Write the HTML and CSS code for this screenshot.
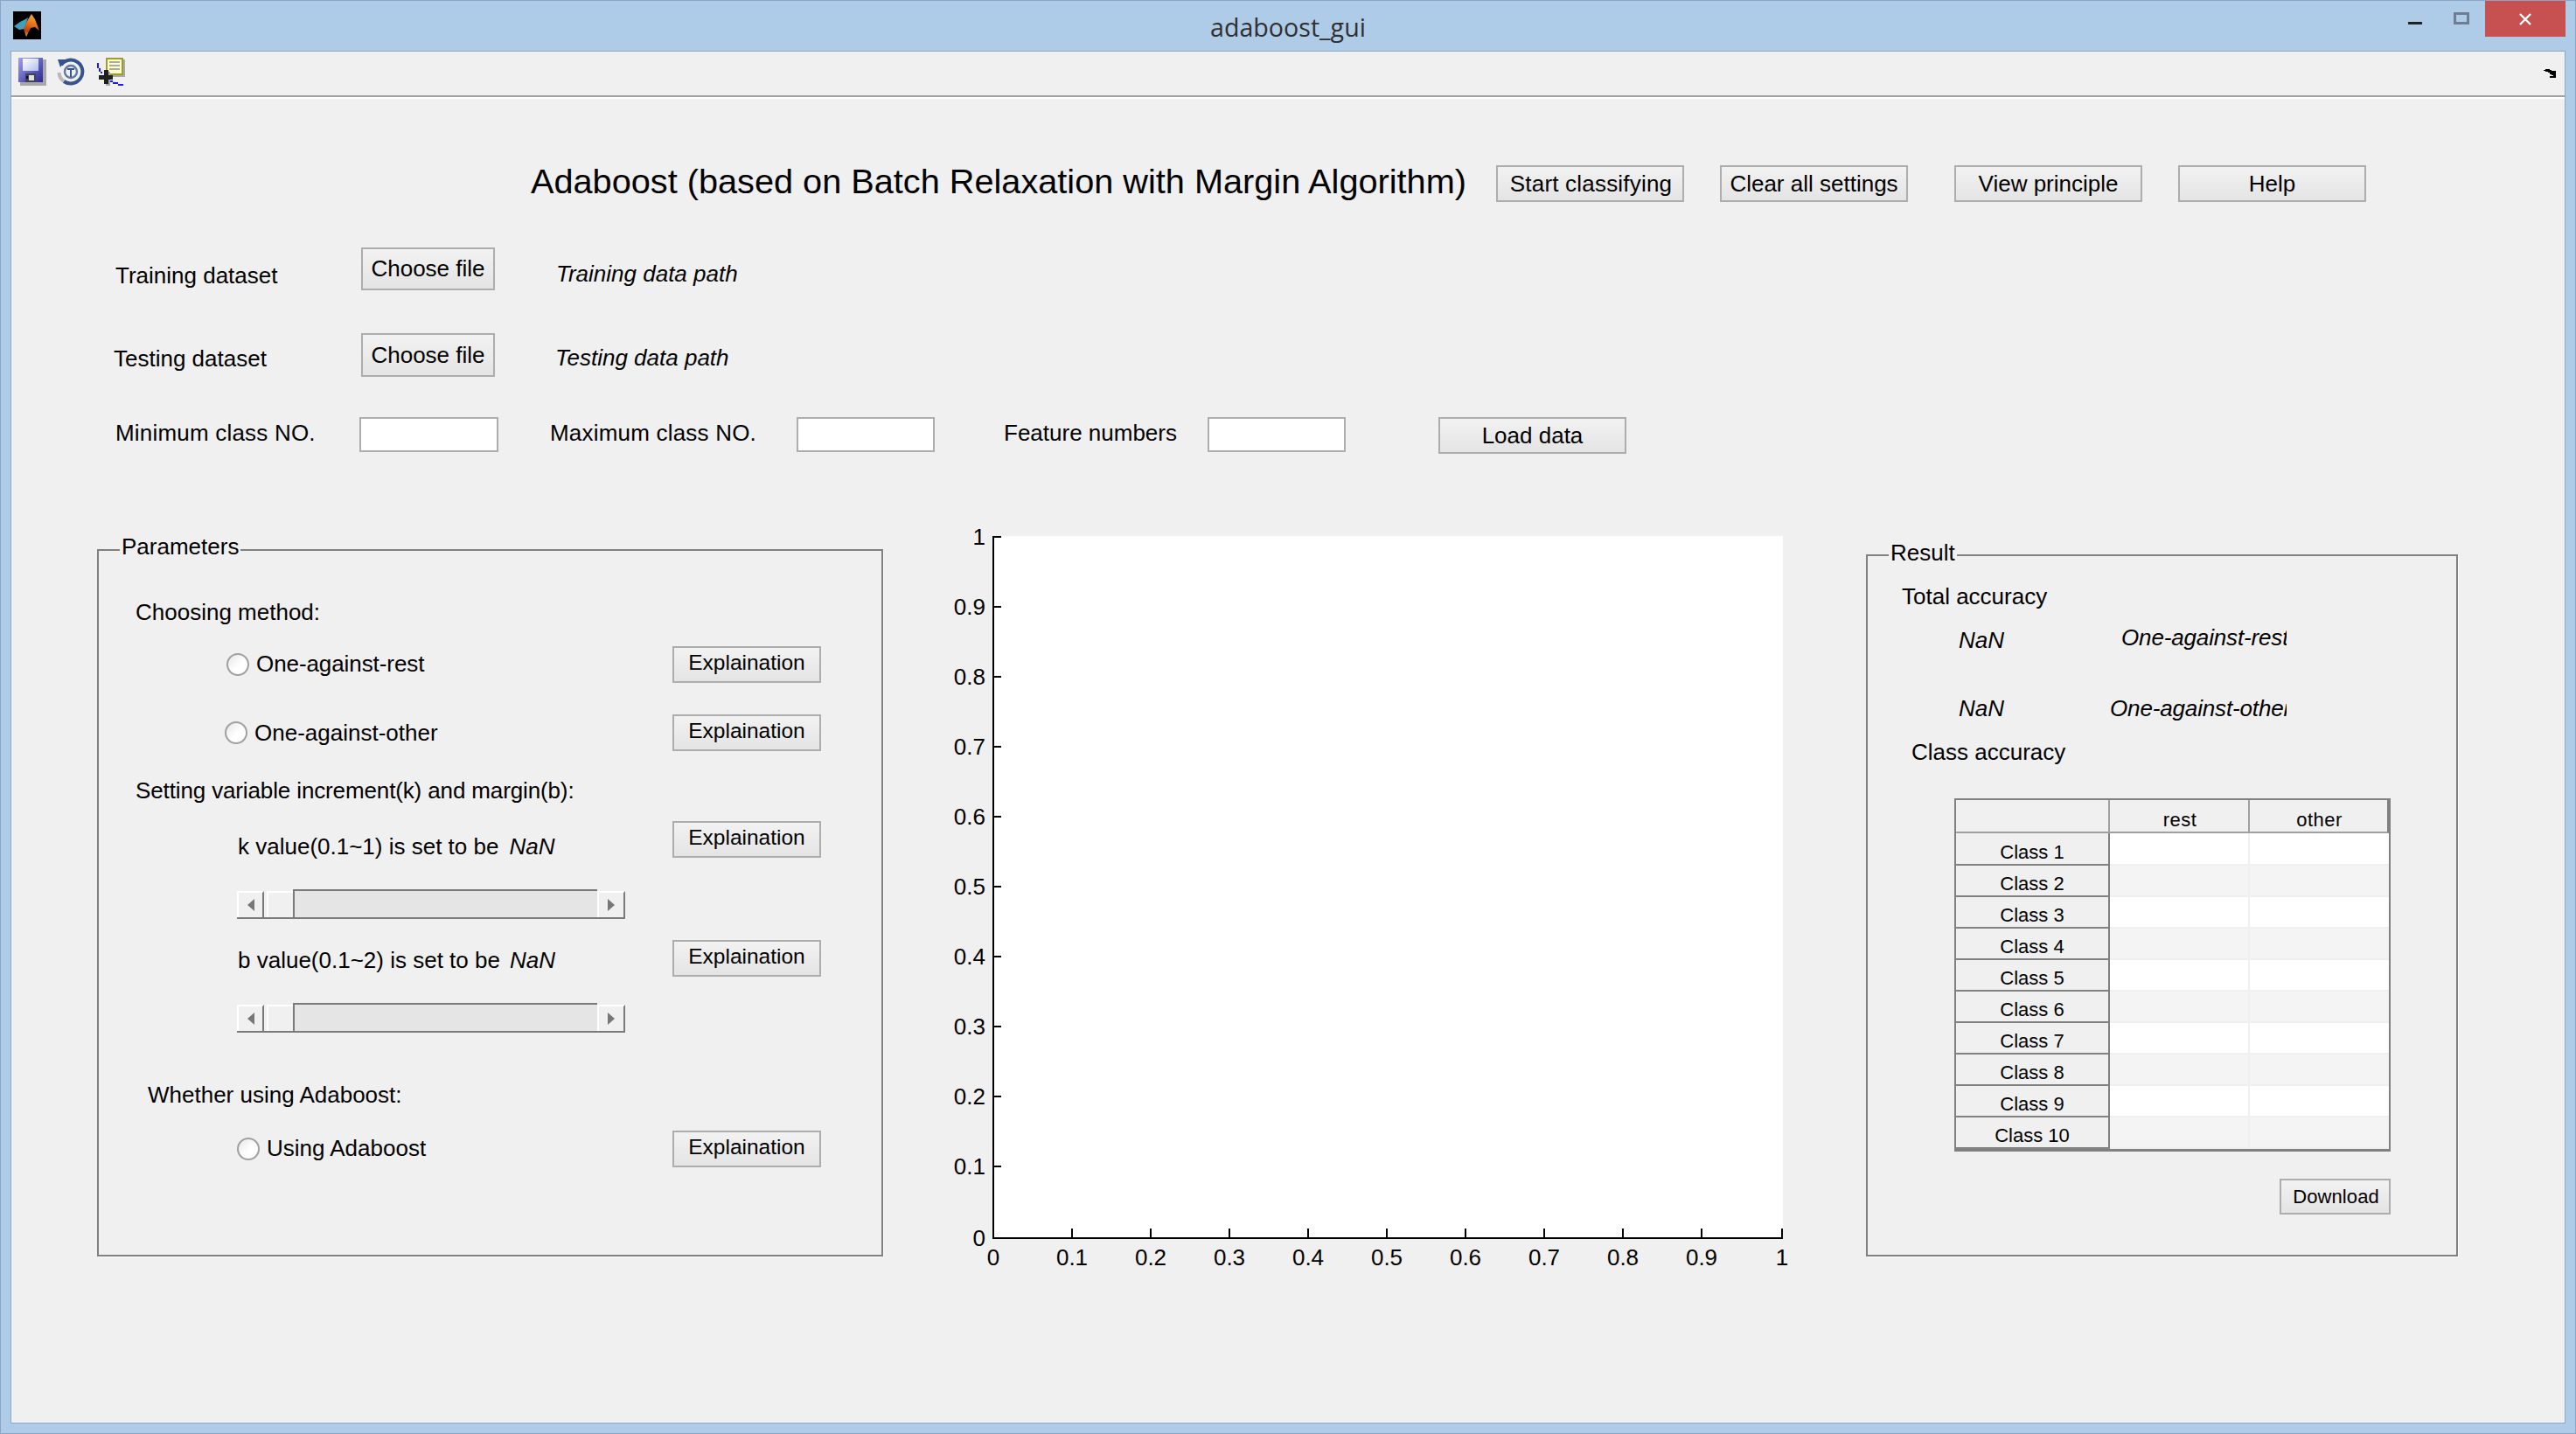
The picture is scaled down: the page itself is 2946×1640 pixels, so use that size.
FILE: index.html
```html
<!DOCTYPE html>
<html lang="en">
<head>
<meta charset="utf-8">
<title>adaboost_gui</title>
<link rel="stylesheet" href="styles.css">
</head>
<body>
<div class="window">
  <header class="titlebar">
    <svg class="app-logo" viewBox="0 0 32 32">
      <defs>
        <linearGradient id="peak" x1="0.6" y1="0" x2="0.4" y2="1">
          <stop offset="0" stop-color="#f0b040"/>
          <stop offset="0.45" stop-color="#e8701c"/>
          <stop offset="0.8" stop-color="#b8400f"/>
          <stop offset="1" stop-color="#e8a020"/>
        </linearGradient>
      </defs>
      <rect width="32" height="32" fill="#000"/>
      <polygon points="1,17 8,12 14,9 17,7 13,20 7,21" fill="#3fa0c0"/>
      <polygon points="21,3 25,9 30,22 25,18 20,19 15,29 12,20 16,11" fill="url(#peak)"/>
    </svg>
    <div class="window-title">adaboost_gui</div>
    <div class="window-controls">
      <span class="win-min"></span>
      <span class="win-max"></span>
      <span class="win-close">
        <svg viewBox="0 0 14 14" class="win-x"><path d="M1 1 L13 13 M13 1 L1 13" stroke="#fff" stroke-width="2.4" fill="none"/></svg>
      </span>
    </div>
  </header>

  <div class="client">
    <div class="toolbar">
      <svg class="tool tool-save" viewBox="0 0 32 32" shape-rendering="crispEdges">
        <defs>
          <linearGradient id="disk" x1="0" y1="0" x2="1" y2="1">
            <stop offset="0" stop-color="#a0a0f8"/>
            <stop offset="1" stop-color="#282890"/>
          </linearGradient>
          <linearGradient id="label" x1="0" y1="0" x2="1" y2="1">
            <stop offset="0" stop-color="#fff"/>
            <stop offset="1" stop-color="#b0c0e8"/>
          </linearGradient>
        </defs>
        <rect x="2" y="2" width="30" height="30" fill="#a8a8a8"/>
        <rect x="0" y="0" width="28" height="28" fill="url(#disk)"/>
        <rect x="5" y="1" width="18" height="14" fill="url(#label)"/>
        <rect x="8" y="18" width="12" height="10" fill="#404058"/>
        <rect x="12" y="20" width="6" height="6" fill="#e0e0e0"/>
        <rect x="9" y="21" width="2" height="3" fill="#101020"/>
      </svg>
      <svg class="tool tool-revert" viewBox="0 0 32 32">
        <path d="M5 8 A13.5 13.5 0 1 1 8 27" fill="none" stroke="#36558f" stroke-width="4"/>
        <path d="M8 27 A13.5 13.5 0 0 1 2.5 17" fill="none" stroke="#b8b8b8" stroke-width="4"/>
        <polygon points="1,2 11,2 4,11" fill="#36558f"/>
        <circle cx="16" cy="16" r="7" fill="none" stroke="#5c78a8" stroke-width="2.4"/>
        <path d="M12 13 H20 M16 13 V22" fill="none" stroke="#36558f" stroke-width="2"/>
      </svg>
      <svg class="tool tool-plot" viewBox="0 0 32 32" shape-rendering="crispEdges">
        <rect x="12" y="2" width="20" height="20" fill="#a8a8a8"/>
        <rect x="10" y="0" width="20" height="20" fill="#9c9c30"/>
        <rect x="12" y="2" width="16" height="16" fill="#ffffc4"/>
        <rect x="14" y="4" width="12" height="2" fill="#aaa"/>
        <rect x="14" y="8" width="12" height="2" fill="#aaa"/>
        <rect x="14" y="12" width="12" height="2" fill="#aaa"/>
        <rect x="0" y="6" width="2" height="6" fill="#1a1aff"/>
        <rect x="2" y="12" width="2" height="4" fill="#1a1aff"/>
        <rect x="4" y="16" width="2" height="2" fill="#1a1aff"/>
        <rect x="14" y="26" width="4" height="2" fill="#1a1aff"/>
        <rect x="18" y="28" width="6" height="2" fill="#1a1aff"/>
        <rect x="24" y="30" width="6" height="2" fill="#1a1aff"/>
        <rect x="10" y="16" width="5" height="16" fill="#a8a8a8"/>
        <rect x="2" y="20" width="16" height="5" fill="#202020"/>
        <rect x="8" y="14" width="5" height="16" fill="#202020"/>
      </svg>
      <svg class="dock-arrow" viewBox="0 0 14 10" shape-rendering="crispEdges">
        <path d="M0 1 H2 V0 H7 V1 H9 V2 H14 V10 H7 V8 H11 V7 H9 V6 H7 V4 H5 V3 H2 V2 H0 Z" fill="#000"/>
      </svg>
    </div>

    <main class="figure">
      <div class="row row-title">
        <h1 class="main-title">Adaboost (based on Batch Relaxation with Margin Algorithm)</h1>
        <button class="btn btn-wide ls-start">Start classifying</button>
        <button class="btn btn-wide gap-41">Clear all settings</button>
        <button class="btn btn-wide gap-53">View principle</button>
        <button class="btn btn-wide gap-41">Help</button>
      </div>

      <div class="row row-train">
        <span class="text w-train">Training dataset</span>
        <button class="btn btn-file h-49">Choose file</button>
        <span class="text italic path-train">Training data path</span>
      </div>

      <div class="row row-test">
        <span class="text w-test">Testing dataset</span>
        <button class="btn btn-file h-50">Choose file</button>
        <span class="text italic path-test">Testing data path</span>
      </div>

      <div class="row row-load">
        <span class="text w-min">Minimum class NO.</span>
        <input class="field field-first" type="text">
        <span class="text w-max">Maximum class NO.</span>
        <input class="field" type="text">
        <span class="text w-feat">Feature numbers</span>
        <input class="field" type="text">
        <button class="btn btn-wide gap-106">Load data</button>
      </div>

      <div class="workspace">
        <section class="panel panel-params">
          <span class="legend text legend-params">Parameters</span>

          <div class="text line-choosing">Choosing method:</div>

          <div class="prow prow-first">
            <input class="radio radio-a" type="radio" name="m">
            <span class="text opt-a">One-against-rest</span>
            <button class="btn btn-exp">Explaination</button>
          </div>
          <div class="prow prow-second">
            <input class="radio radio-b" type="radio" name="m">
            <span class="text opt-b">One-against-other</span>
            <button class="btn btn-exp">Explaination</button>
          </div>

          <div class="text line-setting">Setting variable increment(k) and margin(b):</div>

          <div class="prow prow-k">
            <span class="text value-label">k value(0.1~1) is set to be</span>
            <span class="text italic value-nan">NaN</span>
            <button class="btn btn-exp">Explaination</button>
          </div>
          <div class="slider slider-k">
            <span class="sl-btn"><i class="arrow-left"></i></span>
            <span class="sl-thumb"></span>
            <span class="sl-track"></span>
            <span class="sl-btn sl-btn-right"><i class="arrow-right"></i></span>
          </div>

          <div class="prow prow-b">
            <span class="text value-label">b value(0.1~2) is set to be</span>
            <span class="text italic value-nan">NaN</span>
            <button class="btn btn-exp">Explaination</button>
          </div>
          <div class="slider slider-b">
            <span class="sl-btn"><i class="arrow-left"></i></span>
            <span class="sl-thumb"></span>
            <span class="sl-track"></span>
            <span class="sl-btn sl-btn-right"><i class="arrow-right"></i></span>
          </div>

          <div class="text line-whether">Whether using Adaboost:</div>
          <div class="prow prow-using">
            <input class="radio radio-c" type="radio">
            <span class="text opt-c">Using Adaboost</span>
            <button class="btn btn-exp">Explaination</button>
          </div>
        </section>

        <svg class="plot" viewBox="1060 590 1040 880" width="1040" height="880">
          <rect x="1137" y="613" width="902" height="802" fill="#fff"/>
          <g class="plot-lines" shape-rendering="crispEdges" stroke="#000" stroke-width="2" fill="none">
            <path d="M1136 613 V1417 M1135 1416 H2039"/>
            <path d="M1136 614 H1145 M1136 694 H1145 M1136 774 H1145 M1136 854 H1145 M1136 934 H1145 M1136 1014 H1145 M1136 1094 H1145 M1136 1174 H1145 M1136 1254 H1145 M1136 1334 H1145"/>
            <path d="M1226 1416 V1405 M1316 1416 V1405 M1406 1416 V1405 M1496 1416 V1405 M1586 1416 V1405 M1676 1416 V1405 M1766 1416 V1405 M1856 1416 V1405 M1946 1416 V1405 M2038 1416 V1405"/>
          </g>
          <g class="plot-text y-labels">
            <text x="1127" y="623">1</text>
            <text x="1127" y="703">0.9</text>
            <text x="1127" y="783">0.8</text>
            <text x="1127" y="863">0.7</text>
            <text x="1127" y="943">0.6</text>
            <text x="1127" y="1023">0.5</text>
            <text x="1127" y="1103">0.4</text>
            <text x="1127" y="1183">0.3</text>
            <text x="1127" y="1263">0.2</text>
            <text x="1127" y="1343">0.1</text>
            <text x="1127" y="1425">0</text>
          </g>
          <g class="plot-text x-labels">
            <text x="1136" y="1447">0</text>
            <text x="1226" y="1447">0.1</text>
            <text x="1316" y="1447">0.2</text>
            <text x="1406" y="1447">0.3</text>
            <text x="1496" y="1447">0.4</text>
            <text x="1586" y="1447">0.5</text>
            <text x="1676" y="1447">0.6</text>
            <text x="1766" y="1447">0.7</text>
            <text x="1856" y="1447">0.8</text>
            <text x="1946" y="1447">0.9</text>
            <text x="2038" y="1447">1</text>
          </g>
        </svg>

        <section class="panel panel-result">
          <span class="legend text legend-result">Result</span>
          <div class="text line-total">Total accuracy</div>
          <div class="rrow rrow-first">
            <span class="text italic nan-a">NaN</span>
            <span class="text italic clip-a">One-against-rest</span>
          </div>
          <div class="rrow rrow-second">
            <span class="text italic nan-b">NaN</span>
            <span class="text italic clip-b">One-against-other</span>
          </div>
          <div class="text line-class">Class accuracy</div>
          <table class="acc-table">
            <thead>
              <tr><th class="corner"></th><th>rest</th><th>other</th></tr>
            </thead>
            <tbody>
              <tr class="odd first"><th>Class 1</th><td></td><td></td></tr>
              <tr class="even"><th>Class 2</th><td></td><td></td></tr>
              <tr class="odd"><th>Class 3</th><td></td><td></td></tr>
              <tr class="even"><th>Class 4</th><td></td><td></td></tr>
              <tr class="odd"><th>Class 5</th><td></td><td></td></tr>
              <tr class="even"><th>Class 6</th><td></td><td></td></tr>
              <tr class="odd"><th>Class 7</th><td></td><td></td></tr>
              <tr class="even"><th>Class 8</th><td></td><td></td></tr>
              <tr class="odd"><th>Class 9</th><td></td><td></td></tr>
              <tr class="even"><th>Class 10</th><td></td><td></td></tr>
            </tbody>
          </table>
          <button class="btn btn-download">Download</button>
        </section>
      </div>
    </main>
  </div>
</div>
</body>
</html>
```
FILE: styles.css
```css
* { box-sizing: border-box; }
html, body { margin: 0; padding: 0; }
body { width: 2946px; height: 1640px; overflow: hidden; background: #aecbe8; font-family: "Liberation Sans", Arial, sans-serif; color: #000; }

.window { width: 2946px; height: 1640px; display: flex; flex-direction: column; background: #aecbe8; border: 1px solid #8aa5c5; }

/* title bar */
.titlebar { height: 57px; flex: none; display: grid; grid-template-columns: 1fr auto 1fr; align-items: start; }
.app-logo { width: 32px; height: 32px; margin: 12px 0 0 14px; display: block; }
.window-title { font-family: "Open Sans", sans-serif; font-size: 28.6px; line-height: 36px; margin-top: 12px; color: #303030; }
.window-controls { display: flex; justify-self: end; align-items: flex-start; margin-right: 11px; }
.win-min { width: 16px; height: 3px; background: #222; margin-top: 24px; }
.win-max { width: 18px; height: 14px; border: 3px solid #6e7d8f; margin: 13px 0 0 36px; }
.win-close { width: 92px; height: 41px; background: #c75050; margin-left: 18px; display: flex; align-items: center; justify-content: center; }
.win-x { width: 14px; height: 14px; display: block; }

/* client */
.client { flex: 1; margin: 0 11px 11px 11px; border: 1px solid #8fa8c4; background: #f0f0f0; display: flex; flex-direction: column; min-height: 0; }

.toolbar { height: 52px; flex: none; display: flex; align-items: flex-start; border-bottom: 2px solid #a0a0a0; }
.tool { width: 32px; height: 32px; display: block; margin-top: 7px; }
.tool-save { margin-left: 8px; }
.tool-revert { margin-left: 12px; }
.tool-plot { margin-left: 14px; }
.dock-arrow { width: 14px; height: 10px; margin: 20px 10px 0 auto; }

.figure { flex: 1; padding-top: 76px; border-top: 2px solid #fff; }

.text { font-size: 26px; line-height: 30px; white-space: nowrap; display: block; }
.italic { font-style: italic; }

.row { display: flex; align-items: flex-start; }

/* buttons */
.btn { font-family: "Liberation Sans", Arial, sans-serif; font-size: 26px; line-height: 30px; color: #000; border: 2px solid #adadad; border-radius: 0; background: linear-gradient(to bottom, #f2f2f2, #e4e4e4); padding: 0 0 1px; margin: 0; white-space: nowrap; display: block; flex: none; }
.btn-wide { width: 215px; height: 42px; }
.btn-file { width: 153px; }
.ls-start { letter-spacing: 0.2px; padding-left: 2px; }
.h-49 { height: 49px; }
.h-50 { height: 50px; }
.btn-exp { width: 170px; height: 42px; padding-bottom: 5px; margin-left: auto; font-size: 24.5px; }
.btn-download { width: 127px; height: 41px; font-size: 22px; line-height: 26px; margin: 31px 0 0 471px; padding: 0 0 0 2px; letter-spacing: 0.1px; }
.gap-41 { margin-left: 41px; }
.gap-53 { margin-left: 53px; }
.gap-106 { margin-left: 106px; }

/* top rows */
.row-title { padding-left: 594px; height: 42px; }
.main-title { margin: -3px 0 0; width: 1104px; flex: none; font-weight: normal; font-size: 39.7px; line-height: 42px; white-space: nowrap; height: 45px; }

.row-train { margin-top: 52px; height: 49px; }
.w-train { margin: 17px 0 0 119px; width: 281px; }
.path-train { margin: 15px 0 0 70px; }

.row-test { margin-top: 49px; height: 50px; }
.w-test { margin: 14px 0 0 117px; width: 283px; }
.path-test { margin: 13px 0 0 69px; }

.row-load { margin-top: 46px; height: 42px; }
.w-min { margin: 3px 0 0 119px; width: 279px; letter-spacing: 0.2px; }
.w-max { margin: 3px 0 0 59px; width: 282px; letter-spacing: 0.2px; }
.w-feat { margin: 3px 0 0 79px; width: 233px; }
.field { width: 158px; height: 40px; border: 2px solid #adadad; background: #fff; padding: 0; margin: 0; border-radius: 0; flex: none; display: block; }
.field-first { width: 159px; }

/* workspace */
.workspace { display: flex; align-items: flex-start; margin-top: 71px; padding-left: 98px; }
.panel { position: relative; border: 2px solid #808080; box-shadow: 1px 1px 0 #fff; flex: none; }
.legend { position: absolute; background: #f0f0f0; padding: 0 2px; }

.panel-params { width: 899px; height: 809px; margin-top: 38px; }
.legend-params { left: 24px; top: -20px; }
.line-choosing { margin: 55px 0 0 42px; }
.prow { display: flex; align-items: flex-start; padding-right: 69px; height: 42px; }
.prow-first { margin-top: 24px; }
.prow-second { margin-top: 36px; }
.radio { appearance: none; -webkit-appearance: none; width: 26px; height: 26px; margin: 0; border: 2px solid #a0a0a0; border-radius: 50%; background: linear-gradient(135deg, #e6e6e6, #fff 55%); flex: none; display: block; }
.radio-a { margin: 8px 0 0 146px; }
.radio-b { margin: 8px 0 0 144px; }
.radio-c { margin: 8px 0 0 158px; }
.opt-a { margin: 5px 0 0 8px; letter-spacing: -0.08px; }
.opt-b { margin: 6px 0 0 8px; }
.opt-c { margin: 5px 0 0 8px; }

.line-setting { margin: 30px 0 0 42px; letter-spacing: -0.13px; }
.prow-k { margin-top: 20px; }
.prow-b { margin-top: 24px; }
.value-label { margin: 14px 0 0 159px; }
.value-nan { margin: 14px 0 0 12px; }
.prow-b .value-label { margin-top: 8px; }
.prow-b .value-nan { margin: 8px 0 0 11px; }

.slider { display: flex; width: 444px; height: 34px; margin-left: 158px; border-bottom: 2px solid #7a7a7a; }
.slider-k { margin-top: 36px; }
.slider-b { margin-top: 30px; }
.sl-btn { width: 31px; height: 30px; margin-top: 2px; background: #f0f0f0; border-top: 2px solid #fff; border-left: 2px solid #fff; border-right: 2px solid #7a7a7a; display: flex; align-items: center; justify-content: center; flex: none; }
.sl-btn-right { width: 32px; }
.sl-thumb { width: 30px; height: 30px; margin: 2px 0 0 3px; background: #f0f0f0; border-top: 2px solid #fff; border-left: 2px solid #fff; flex: none; }
.sl-track { flex: 1; background: #e5e5e5; border-top: 2px solid #7a7a7a; border-left: 2px solid #7a7a7a; }
.arrow-left { width: 0; height: 0; border: 7px solid transparent; border-left-width: 0; border-right: 8px solid #777; display: block; }
.arrow-right { width: 0; height: 0; border: 7px solid transparent; border-right-width: 0; border-left: 8px solid #777; display: block; }

.line-whether { margin: 56px 0 0 56px; }
.prow-using { margin-top: 26px; }

.plot { display: block; flex: none; margin-left: 50px; }
.plot-text { font-family: "Liberation Sans", Arial, sans-serif; font-size: 26px; fill: #000; }
.y-labels { text-anchor: end; }
.x-labels { text-anchor: middle; }

/* result */
.panel-result { width: 677px; height: 803px; margin: 44px 0 0 34px; }
.legend-result { left: 24px; top: -19px; }
.line-total { margin: 31px 0 0 39px; }
.rrow { display: flex; align-items: flex-start; }
.rrow-first { margin-top: 17px; height: 30px; }
.rrow-second { margin-top: 51px; height: 30px; }
.nan-a { margin: 3px 0 0 104px; width: 186px; }
.nan-b { margin: 0 0 0 104px; width: 173px; }
.clip-a { width: 189px; overflow: hidden; letter-spacing: -0.15px; }
.clip-b { width: 202px; overflow: hidden; letter-spacing: -0.15px; }
.line-class { margin: 20px 0 0 50px; }

.acc-table { margin: 38px 0 0 99px; width: 499px; table-layout: fixed; border-collapse: separate; border-spacing: 0; border: 2px solid #808080; border-bottom-width: 3px; font-size: 22px; }
.acc-table thead th { width: 160px; height: 38px; padding: 11px 0 0 2px; line-height: 24px; font-weight: normal; letter-spacing: 0.5px; background: #f0f0f0; border-right: 2px solid #a0a0a0; border-bottom: 2px solid #a0a0a0; vertical-align: top; }
.acc-table thead th.corner { width: 176px; }
.acc-table thead th:last-child { width: 159px; border-right-color: #808080; }
.acc-table tbody th { height: 36px; padding: 9px 0 0; line-height: 24px; font-weight: normal; background: #f0f0f0; border-right: 2px solid #808080; border-bottom: 2px solid #808080; vertical-align: top; }
.acc-table tbody tr.first th { height: 37px; padding-top: 10px; }
.acc-table td { padding: 0; border-right: 2px solid #f0f0f0; border-bottom: 2px solid #f0f0f0; }
.acc-table td:last-child { border-right: none; }
.acc-table tr.odd td { background: #fff; }
.acc-table tr.even td { background: #f4f4f4; }
```
